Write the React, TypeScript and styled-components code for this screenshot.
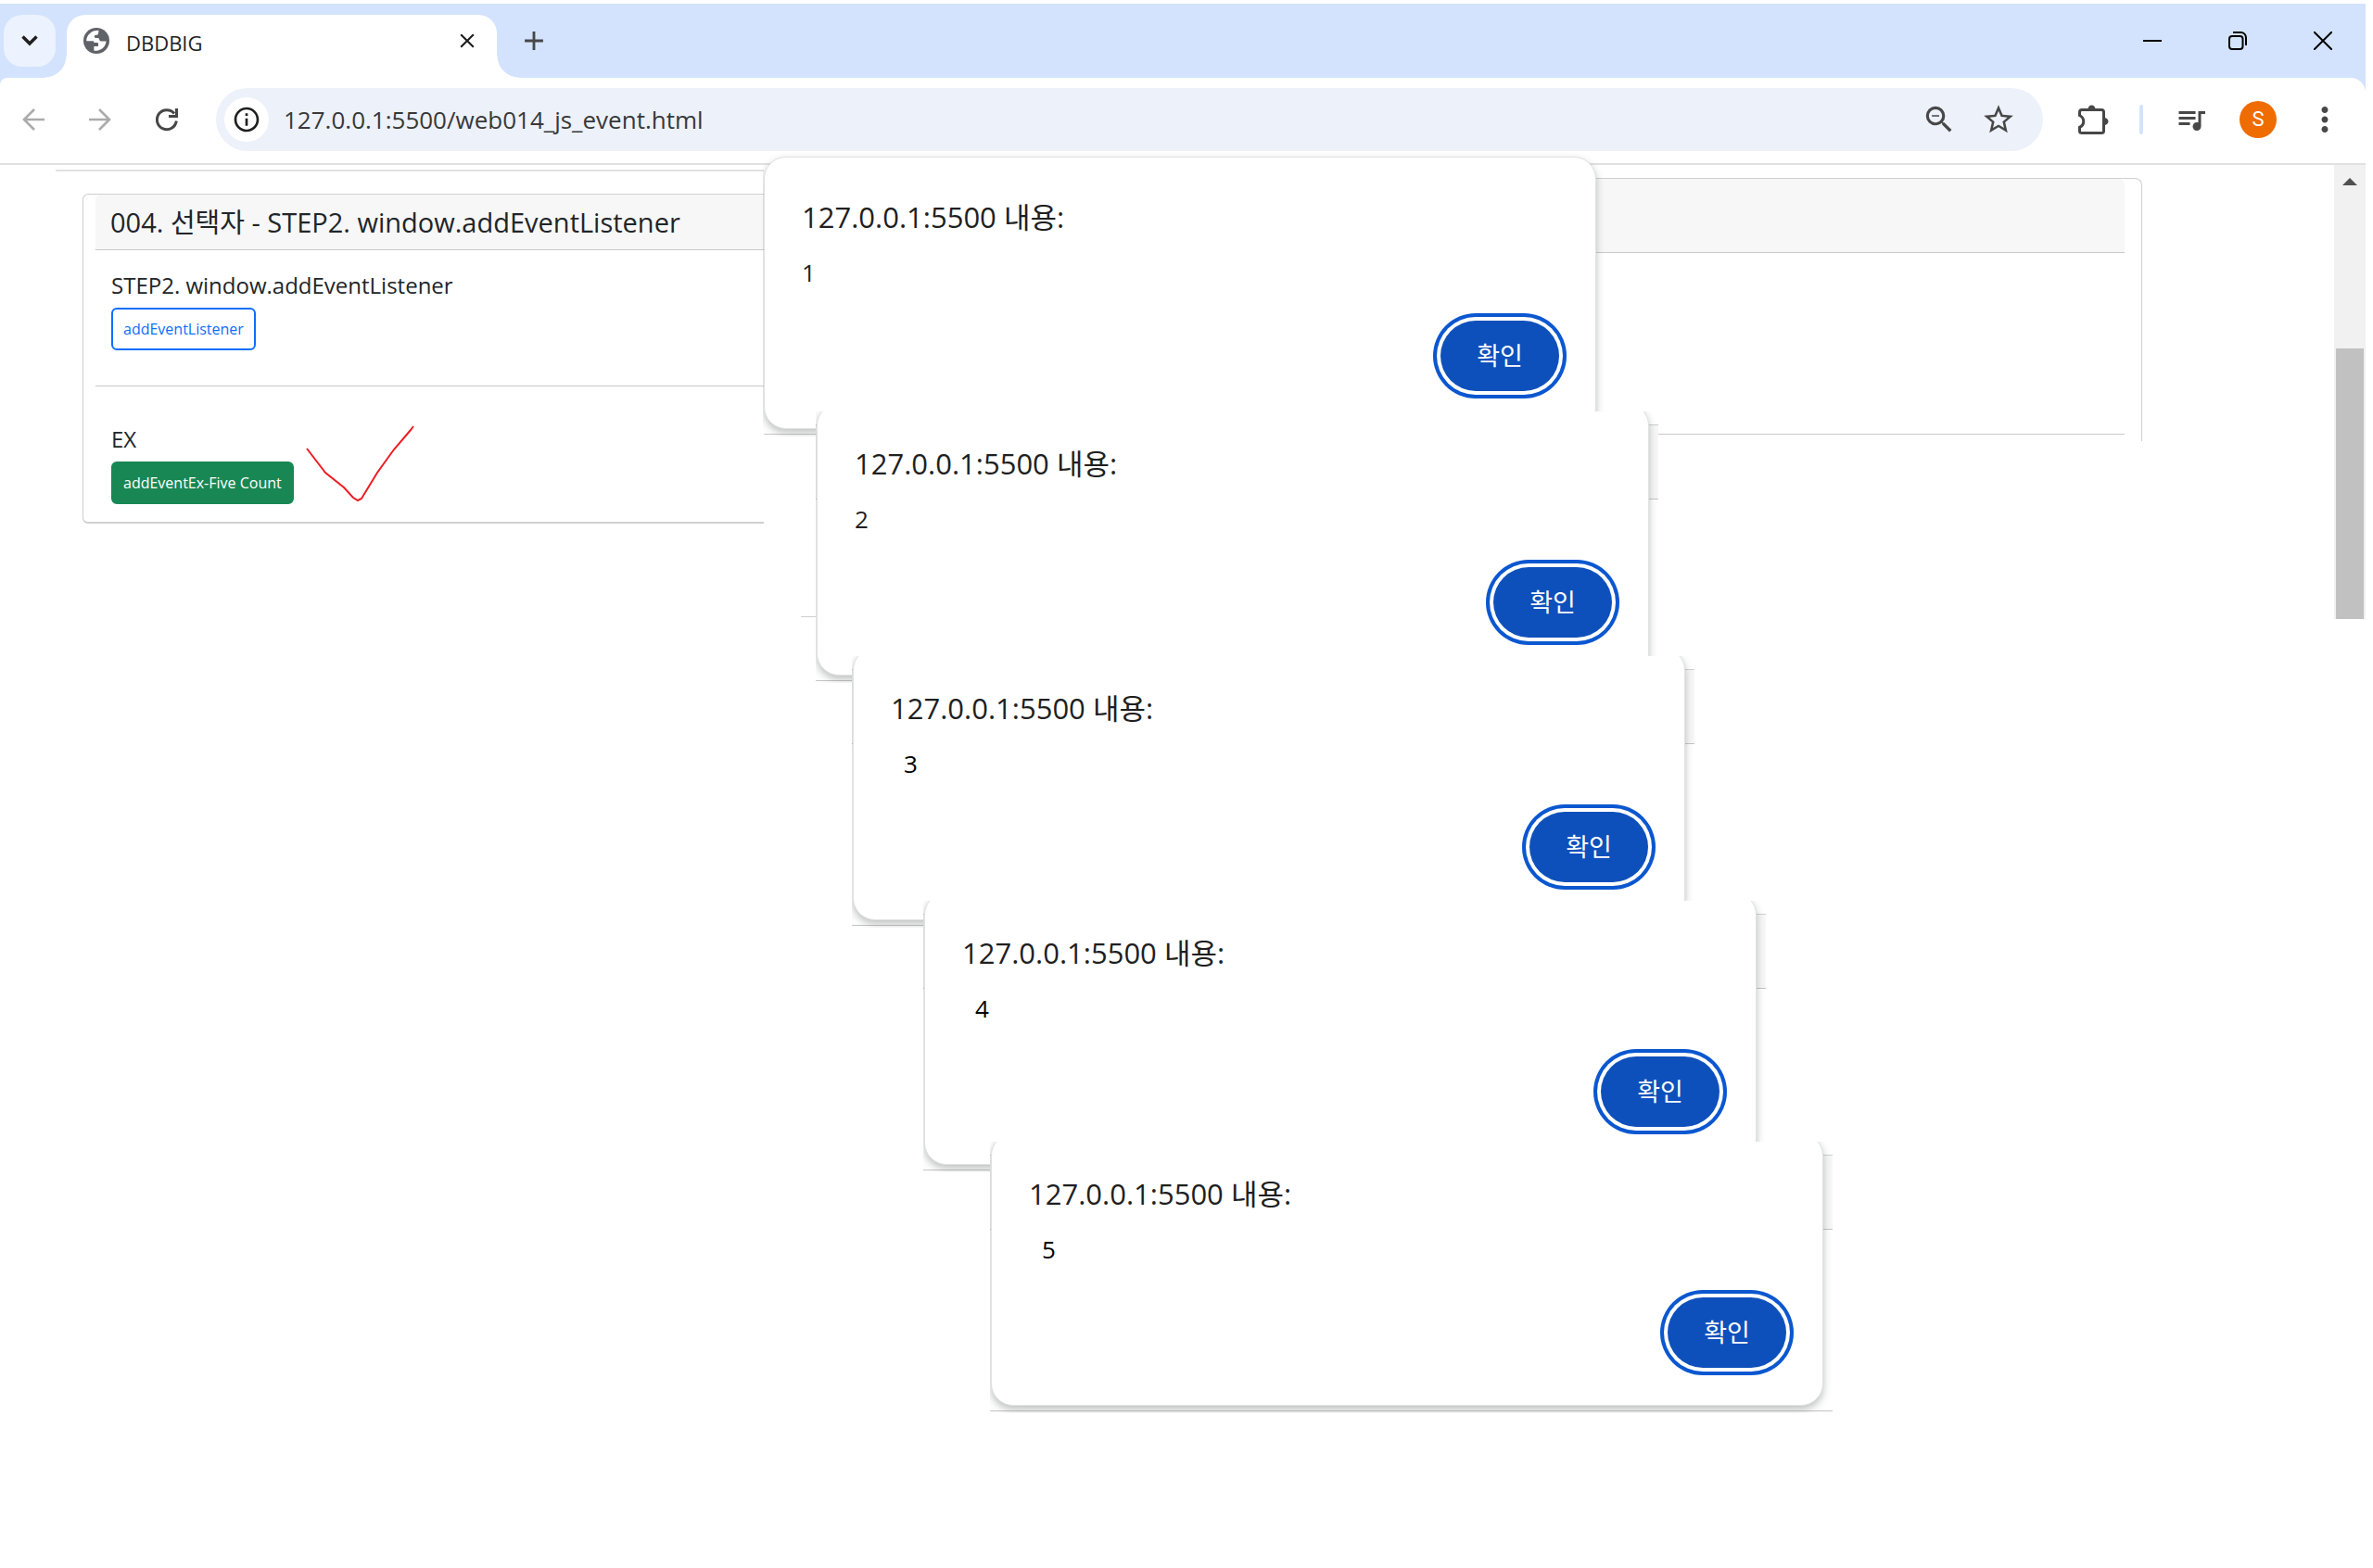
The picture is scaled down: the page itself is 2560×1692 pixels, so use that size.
import React from "react";
import styled, { createGlobalStyle, css } from "styled-components";
import {
  MdAdd,
  MdClose,
  MdMoreVert,
  MdOutlineInfo,
  MdOutlineZoomOut,
  MdQueueMusic,
  MdStarOutline,
} from "react-icons/md";

const fontStack = `"Open Sans", "Noto Sans CJK KR", sans-serif`;

const GlobalStyle = createGlobalStyle`
  *, *::before, *::after { box-sizing: border-box; }
  body {
    margin: 0;
    background: #fff;
    color: #212529;
    font-family: ${fontStack};
    font-weight: 400;
  }
  button, input { font: inherit; color: inherit; }
  h1, h2, h3, p { margin: 0; font-weight: inherit; }
`;

/* ---------- window frame ---------- */

const Desktop = styled.div`
  position: relative;
  min-height: 100vh;
  padding: 4px 8px 0 0;
  overflow: hidden;
`;

const TitleBar = styled.header`
  display: flex;
  align-items: flex-start;
  height: 80px;
  padding: 12px 0 0 4px;
  background: #d3e3fd;
`;

const IconButton = styled.button<{ $size?: number; $dim?: boolean }>`
  display: flex;
  align-items: center;
  justify-content: center;
  flex: none;
  width: ${(p) => p.$size ?? 56}px;
  height: ${(p) => p.$size ?? 56}px;
  padding: 0;
  border: 0;
  border-radius: 50%;
  background: transparent;
  color: ${(p) => (p.$dim ? "#ababab" : "#474747")};
`;

const TabSearch = styled(IconButton)`
  border-radius: 20px;
  background: #ecf2fe;
  color: #1f1f1f;
`;

const Tab = styled.div`
  position: relative;
  display: flex;
  align-items: center;
  width: 464px;
  height: 68px;
  margin-left: 12px;
  padding: 0 18px 12px 18px;
  border-radius: 20px 20px 0 0;
  background: #fff;
  color: #1f1f1f;

  &::before,
  &::after {
    content: "";
    position: absolute;
    bottom: 0;
    width: 24px;
    height: 24px;
  }
  &::before {
    right: 100%;
    background: radial-gradient(circle at 0 0, transparent 23px, #fff 24px);
  }
  &::after {
    left: 100%;
    background: radial-gradient(circle at 100% 0, transparent 23px, #fff 24px);
  }
`;

const TabTitle = styled.span`
  flex: 1;
  margin-left: 18px;
  font-size: 22px;
  line-height: 32px;
  padding-top: 4px;
`;

const NewTab = styled(IconButton)`
  margin-left: 12px;
`;

const WindowControls = styled.div`
  display: flex;
  margin-left: auto;
`;

const WindowButton = styled.button`
  display: flex;
  align-items: center;
  justify-content: center;
  width: 92px;
  height: 56px;
  padding: 0;
  border: 0;
  background: transparent;
  color: #000;
`;

const ToolbarBack = styled.div`
  background: #d3e3fd;
`;

const Toolbar = styled.nav`
  display: flex;
  align-items: center;
  height: 94px;
  padding: 0 16px 2px 8px;
  border-bottom: 2px solid #e1e1e1;
  border-radius: 8px 16px 0 0;
  background: #fff;
`;

const NavButtons = styled.div`
  display: flex;
  gap: 16px;
  margin-right: 25px;
`;

const AddressBar = styled.form`
  display: flex;
  align-items: center;
  flex: 1;
  height: 68px;
  padding: 0 20px 0 9px;
  border-radius: 34px;
  background: #ecf1fa;
`;

const SiteInfo = styled(IconButton)`
  background: #fff;
  color: #1f1f1f;
`;

const Address = styled.input`
  flex: 1;
  min-width: 0;
  margin-left: 16px;
  padding: 0;
  border: 0;
  outline: 0;
  background: transparent;
  color: #383838;
  font-size: 26px;
  line-height: 40px;
`;

const BarActions = styled.div`
  display: flex;
  gap: 8px;
`;

const Extensions = styled(IconButton)`
  margin: 0 22px 0 26px;
`;

const Divider = styled.span`
  width: 4px;
  height: 32px;
  border-radius: 2px;
  background: #d3e3fd;
`;

const MediaButton = styled(IconButton)`
  margin-left: 24px;
`;

const Avatar = styled.button`
  width: 40px;
  height: 40px;
  margin: 0 24px;
  padding: 0;
  border: 0;
  border-radius: 50%;
  background: #ef6c00;
  color: #fff;
  font-family: Roboto, sans-serif;
  font-size: 22px;
  line-height: 40px;
`;

/* ---------- page ---------- */

const Viewport = styled.main`
  display: grid;
  grid-template-columns: 824px 1fr 34px;
  align-items: start;
`;

const LeftPane = styled.section`
  padding: 5px 0 0 60px;
`;

const TopRule = styled.hr`
  height: 2px;
  margin: 0 0 24px;
  border: 0;
  background: #e1e1e1;
`;

const card = css`
  border: 1px solid #cfcfcf;
`;

const Card = styled.article`
  ${card}
  margin-left: 29px;
  padding-left: 13px;
  border-right: 0;
  border-bottom-width: 2px;
  border-radius: 6px 0 0 6px;
`;

const CardHeader = styled.h1`
  padding: 10px 16px 9px;
  border-bottom: 1px solid #c9c9c9;
  border-radius: 5px 0 0 0;
  background: #f7f7f7;
  font-size: 29px;
  line-height: 40px;
`;

const CardBlock = styled.div<{ $last?: boolean }>`
  padding: ${(p) => (p.$last ? "39px 17px 19px" : "20px 17px 38px")};
  border-bottom: ${(p) => (p.$last ? "0" : "1px solid #c9c9c9")};
`;

const BlockTitle = styled.h2`
  margin-bottom: 6px;
  font-size: 24px;
  line-height: 36px;
`;

const Row = styled.div`
  position: relative;
  display: flex;
`;

const ActionButton = styled.button<{ $solid?: boolean }>`
  height: 46px;
  padding: 0 11px;
  border: 2px solid ${(p) => (p.$solid ? "#198754" : "#0d6efd")};
  border-radius: 6px;
  background: ${(p) => (p.$solid ? "#198754" : "#fff")};
  color: ${(p) => (p.$solid ? "#fff" : "#0d6efd")};
  font-size: 16px;
  line-height: 40px;
`;

const PenMark = styled.svg`
  position: absolute;
  left: 209px;
  bottom: 0;
  width: 120px;
  height: 86px;
`;

const RightPane = styled.section`
  padding: 14px 207px 0 0;
`;

const BackCard = styled.article`
  ${card}
  height: 284px;
  padding-right: 18px;
  border-left: 0;
  border-bottom: 0;
  border-radius: 0 8px 0 0;
`;

const BackHeader = styled.div`
  height: 80px;
  border-bottom: 1px solid #c9c9c9;
  border-radius: 0 6px 0 0;
  background: #f7f7f7;
`;

const BackBlock = styled.div`
  height: 196px;
  border-bottom: 1px solid #c9c9c9;
`;

const StrayRule = styled.hr`
  width: 16px;
  height: 1px;
  margin: 189px 0 0 40px;
  border: 0;
  background: #cfcfcf;
`;

const Scrollbar = styled.aside`
  display: flex;
  flex-direction: column;
  align-items: center;
  height: 490px;
  padding-top: 14px;
  background: #f1f1f1;
`;

const ScrollThumb = styled.div`
  width: 30px;
  flex: 1;
  margin-top: 176px;
  background: #c1c1c1;
`;

/* ---------- alerts ---------- */

const AlertPatch = styled.div<{ $cut: boolean; $left: number; $top: number }>`
  position: absolute;
  left: ${(p) => p.$left}px;
  top: ${(p) => p.$top}px;
  width: 909px;
  padding: 0 10px 8px 1px;
  clip-path: ${(p) => (p.$cut ? "inset(9px 0 0 0)" : "inset(-9px 0 0 0)")};
  ${(p) =>
    p.$cut &&
    css`
      background:
        linear-gradient(#c4c4c4, #c4c4c4) 0 299px / 100% 1px no-repeat,
        linear-gradient(#c4c4c4, #c4c4c4) 0 103px / 100% 1px no-repeat,
        linear-gradient(#cfcfcf, #cfcfcf) 0 23px / 100% 1px no-repeat,
        linear-gradient(#f7f7f7, #f7f7f7) 0 24px / 100% 79px no-repeat,
        #fff;
    `}
`;

const Alert = styled.div`
  display: flex;
  flex-direction: column;
  height: 294px;
  padding: 44px 39px 40px 40px;
  border: 1px solid #e0e2e1;
  border-radius: 24px;
  background: #fff;
  box-shadow: 0 4px 8px rgba(50, 64, 60, 0.32);
  color: #1f1f1f;
`;

const AlertTitle = styled.h3`
  font-size: 31px;
  line-height: 40px;
`;

const AlertText = styled.p<{ $shifted: boolean }>`
  margin-top: 22px;
  padding-left: ${(p) => (p.$shifted ? 14 : 0)}px;
  color: ${(p) => (p.$shifted ? "#000" : "inherit")};
  font-size: 26px;
  line-height: 36px;
`;

const ConfirmButton = styled.button`
  align-self: flex-end;
  width: 128px;
  height: 76px;
  margin-top: auto;
  padding: 0;
  border: 0;
  border-radius: 38px;
  background: #0e50bb;
  box-shadow: 0 0 0 4px #fff, 0 0 0 8px #0b57d0;
  color: #fff;
  font-size: 27px;
  line-height: 40px;
`;

const GlobeIcon = () => (
  <svg width="28" height="28" viewBox="0 0 28 28" aria-hidden="true">
    <circle cx="14" cy="14" r="14" fill="#5f6368" />
    <path
      d="M3.2 14.2C3.2 9 7 4.4 12 3.2l4.500 -.4-.5 3.400c-.3 1.400-1 1.600-2.600 1.600-.7 0-1.600.6-1.600 1.800 0 1 .7 1.400 1.600 1.400h1.800c1.600 0 1.600.6 2 2 .4 1.200 1.200 1.600 2.600 1.600h4.700c-.2 4.600-3.700 9-9.500 10.200l-3.600-.1v-4.600h3.600c.8 0 1-.4 1-1.200v-1.800c0-.8-.4-1.200-1.200-1.200h-3.600v-1.700z"
      fill="#fff"
    />
  </svg>
);

const ArrowIcon = ({ flip = false }: { flip?: boolean }) => (
  <svg width="24" height="24" viewBox="0 0 24 24" fill="none" stroke="currentColor" strokeWidth="2.6" aria-hidden="true">
    <path d={flip ? "M0 12h22M11 1l11 11-11 11" : "M24 12H2M13 1 2 12l11 11"} />
  </svg>
);

const ReloadIcon = () => (
  <svg width="24" height="26" viewBox="0 0 24 26" fill="none" stroke="currentColor" strokeWidth="3" aria-hidden="true">
    <path d="M22.300 14.500A10.500 10.500 0 1 1 20 6.500" />
    <path d="M22.500 1v8.500H14" />
  </svg>
);

const PuzzleIcon = () => (
  <svg width="33" height="33" viewBox="0 0 33 33" fill="none" stroke="currentColor" strokeWidth="3" aria-hidden="true">
    <path d="M1.500 11.500V8q0-2.500 2.500-2.500h21q2.500 0 2.500 2.500v20.500q0 2-2.500 2H4q-2.500 0-2.500-2v-4.200q4.200-1.800 4.200-6.300t-4.200-6.500z" />
    <path d="M10.500 5a4 4.500 0 0 1 8 0zM28 14a4.500 4 0 0 1 0 8z" fill="currentColor" stroke="none" />
  </svg>
);

const alerts = [
  { text: "1", left: 823, top: 169 },
  { text: "2", left: 880, top: 435 },
  { text: "3", left: 919, top: 699, shifted: true },
  { text: "4", left: 996, top: 963, shifted: true },
  { text: "5", left: 1068, top: 1223, shifted: true },
];

export default function App() {
  return (
    <Desktop>
      <GlobalStyle />
      <TitleBar>
        <TabSearch aria-label="탭 검색">
          <svg width="18" height="12" viewBox="0 0 18 12" fill="none" stroke="currentColor" strokeWidth="3.400" aria-hidden="true">
            <path d="M1.500 1.500 9 9l7.500-7.500" />
          </svg>
        </TabSearch>
        <Tab>
          <GlobeIcon />
          <TabTitle>DBDBIG</TabTitle>
          <IconButton $size={28} aria-label="탭 닫기">
            <MdClose size={26} color="#1f1f1f" />
          </IconButton>
        </Tab>
        <NewTab $size={56} aria-label="새 탭">
          <MdAdd size={34} />
        </NewTab>
        <WindowControls>
          <WindowButton aria-label="최소화">
            <svg width="20" height="20" viewBox="0 0 20 20" aria-hidden="true">
              <path d="M0 10h20" stroke="currentColor" strokeWidth="2" />
            </svg>
          </WindowButton>
          <WindowButton aria-label="이전 크기로 복원">
            <svg width="20" height="20" viewBox="0 0 20 20" fill="none" stroke="currentColor" strokeWidth="2" aria-hidden="true">
              <rect x="1" y="5" width="14.500" height="14" rx="3" />
              <path d="M5 1h8.500a5.500 5.500 0 0 1 5.500 5.500v8.500" />
            </svg>
          </WindowButton>
          <WindowButton aria-label="닫기">
            <svg width="20" height="20" viewBox="0 0 20 20" aria-hidden="true">
              <path d="M0 0l20 20M20 0 0 20" stroke="currentColor" strokeWidth="2" />
            </svg>
          </WindowButton>
        </WindowControls>
      </TitleBar>

      <ToolbarBack>
        <Toolbar>
          <NavButtons>
            <IconButton $dim aria-label="뒤로">
              <ArrowIcon />
            </IconButton>
            <IconButton $dim aria-label="앞으로">
              <ArrowIcon flip />
            </IconButton>
            <IconButton aria-label="새로고침">
              <ReloadIcon />
            </IconButton>
          </NavButtons>
          <AddressBar onSubmit={(e) => e.preventDefault()}>
            <SiteInfo type="button" $size={48} aria-label="사이트 정보 보기">
              <MdOutlineInfo size={32} />
            </SiteInfo>
            <Address aria-label="주소창" defaultValue="127.0.0.1:5500/web014_js_event.html" />
            <BarActions>
              <IconButton type="button" aria-label="축소">
                <MdOutlineZoomOut size={38} />
              </IconButton>
              <IconButton type="button" aria-label="북마크에 추가">
                <MdStarOutline size={38} />
              </IconButton>
            </BarActions>
          </AddressBar>
          <Extensions aria-label="확장 프로그램">
            <PuzzleIcon />
          </Extensions>
          <Divider />
          <MediaButton aria-label="미디어 제어">
            <MdQueueMusic size={36} />
          </MediaButton>
          <Avatar aria-label="프로필">S</Avatar>
          <IconButton aria-label="메뉴">
            <MdMoreVert size={42} />
          </IconButton>
        </Toolbar>
      </ToolbarBack>

      <Viewport>
        <LeftPane>
          <TopRule />
          <Card>
            <CardHeader>004. 선택자 - STEP2. window.addEventListener</CardHeader>
            <CardBlock>
              <BlockTitle>STEP2. window.addEventListener</BlockTitle>
              <Row>
                <ActionButton>addEventListener</ActionButton>
              </Row>
            </CardBlock>
            <CardBlock $last>
              <BlockTitle>EX</BlockTitle>
              <Row>
                <ActionButton $solid>addEventEx-Five Count</ActionButton>
                <PenMark viewBox="0 0 120 86" fill="none" stroke="#ed1c24" strokeWidth="2" aria-hidden="true">
                  <path d="M2 26l20 26 20 16 10 11 5 3 4-2 17-28 18-25 18-21 3-4" />
                </PenMark>
              </Row>
            </CardBlock>
          </Card>
        </LeftPane>
        <RightPane>
          <BackCard>
            <BackHeader />
            <BackBlock />
          </BackCard>
          <StrayRule />
        </RightPane>
        <Scrollbar>
          <svg width="16" height="8" viewBox="0 0 16 8" aria-hidden="true">
            <path d="M8 0l8 8H0z" fill="#505050" />
          </svg>
          <ScrollThumb />
        </Scrollbar>
      </Viewport>

      {alerts.map((a, i) => (
        <AlertPatch key={a.text} $left={a.left} $top={a.top} $cut={i > 0}>
          <Alert role="alertdialog" aria-label={`127.0.0.1:5500 내용: ${a.text}`}>
            <AlertTitle>127.0.0.1:5500 내용:</AlertTitle>
            <AlertText $shifted={Boolean(a.shifted)}>{a.text}</AlertText>
            <ConfirmButton>확인</ConfirmButton>
          </Alert>
        </AlertPatch>
      ))}
    </Desktop>
  );
}
